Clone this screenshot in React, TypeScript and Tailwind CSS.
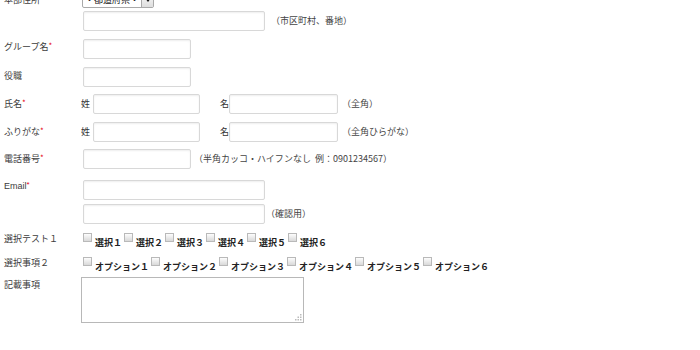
import React from "react";

const base = "font-['Noto_Sans_CJK_JP','Noto_Sans',sans-serif]";
const input =
  "block h-[20px] bg-white border border-[#d8d8d8] rounded-[2px] shadow-[inset_0_1px_2px_rgba(0,0,0,0.07)]";

function Req() {
  return <span className="text-[#e60012] text-[8px] align-top relative top-[-1px]">*</span>;
}

function Label({
  children,
  req,
  narrow,
  className = "",
}: {
  children: React.ReactNode;
  req?: boolean;
  narrow?: boolean;
  className?: string;
}) {
  return (
    <div
      className={`${narrow ? "w-[81px]" : "w-[83px]"} shrink-0 pl-[4px] text-[9px] leading-[12px] text-[#3c3c3c] ${className}`}
    >
      {children}
      {req && <Req />}
    </div>
  );
}

function Check({ text }: { text: string }) {
  return (
    <label className="flex items-start mr-[2px]">
      <span className="block w-[9px] h-[9px] border border-[#b9b9b9] bg-gradient-to-b from-[#fdfdfd] to-[#d9d9d9]" />
      <span className="ml-[3px] mt-[4px] text-[9px] leading-[12px] font-bold text-[#222]">{text}</span>
    </label>
  );
}

export default function App() {
  const tests = ["選択１", "選択２", "選択３", "選択４", "選択５", "選択６"];
  const opts = ["オプション１", "オプション２", "オプション３", "オプション４", "オプション５", "オプション６"];

  return (
    <div className={`w-[700px] h-[350px] overflow-hidden bg-white ${base}`}>
      <div className="-mt-[8px]">
        {/* 本部住所 */}
        <div className="flex">
          <Label className="pt-[2px]">本部住所</Label>
          <div className="-ml-[1px] flex h-[16px] w-[72px] border border-[#a9a9a9] rounded-[2px] bg-white">
            <span className="flex-1 text-[9px] leading-[14px] text-[#222] pl-[2px]">・都道府県・</span>
            <span className="w-[12px] border-l border-[#a9a9a9] bg-gradient-to-b from-[#fafafa] to-[#dedede] flex items-center justify-center">
              <svg width="6" height="4" viewBox="0 0 6 4"><path d="M0 0h6L3 4z" fill="#111" /></svg>
            </span>
          </div>
        </div>
        <div className="flex items-center mt-[3px]">
          <div className="w-[83px] shrink-0" />
          <span className={`${input} w-[182px]`} />
          <span className="ml-[6px] text-[9px] text-[#444]">（市区町村、番地）</span>
        </div>

        {/* グループ名 */}
        <div className="flex mt-[8px]">
          <Label req className="pt-[2px]">グループ名</Label>
          <span className={`${input} w-[108px]`} />
        </div>

        {/* 役職 */}
        <div className="flex mt-[8px]">
          <Label className="pt-[3px]">役職</Label>
          <span className={`${input} w-[108px]`} />
        </div>

        {/* 氏名 */}
        <div className="flex items-center mt-[7px]">
          <Label req narrow>氏名</Label>
          <span className="text-[9px] text-[#333] w-[12px]">姓</span>
          <span className={`${input} w-[107px]`} />
          <span className="ml-[20px] text-[9px] text-[#333] w-[9px]">名</span>
          <span className={`${input} w-[109px]`} />
          <span className="ml-[4px] text-[9px] text-[#444]">（全角）</span>
        </div>

        {/* ふりがな */}
        <div className="flex items-center mt-[8px]">
          <Label req narrow>ふりがな</Label>
          <span className="text-[9px] text-[#333] w-[12px]">姓</span>
          <span className={`${input} w-[107px]`} />
          <span className="ml-[20px] text-[9px] text-[#333] w-[9px]">名</span>
          <span className={`${input} w-[109px]`} />
          <span className="ml-[4px] text-[9px] text-[#444]">（全角ひらがな）</span>
        </div>

        {/* 電話番号 */}
        <div className="flex items-center mt-[7px]">
          <Label req>電話番号</Label>
          <span className={`${input} w-[108px]`} />
          <span className="ml-[3px] text-[9px] text-[#444]">（半角カッコ・ハイフンなし&nbsp;&nbsp;例：0901234567）</span>
        </div>

        {/* Email */}
        <div className="flex mt-[11px]">
          <Label req className="font-['Liberation_Sans',sans-serif]">Email</Label>
          <div>
            <span className={`${input} w-[182px]`} />
            <div className="flex items-center mt-[4px]">
              <span className={`${input} w-[182px]`} />
              <span className="ml-[1px] text-[9px] text-[#444]">（確認用）</span>
            </div>
          </div>
        </div>

        {/* 選択テスト１ */}
        <div className="flex mt-[9px]">
          <Label>選択テスト１</Label>
          <div className="flex">
            {tests.map((t) => (
              <Check key={t} text={t} />
            ))}
          </div>
        </div>

        {/* 選択事項２ */}
        <div className="flex mt-[8px]">
          <Label>選択事項２</Label>
          <div className="flex">
            {opts.map((t) => (
              <Check key={t} text={t} />
            ))}
          </div>
        </div>

        {/* 記載事項 */}
        <div className="flex mt-[4px]">
          <Label narrow className="pt-[2px]">記載事項</Label>
          <div className="relative">
            <textarea className="block w-[223px] h-[46px] resize-none border border-[#b8b8b8] bg-white outline-none" />
            <svg className="absolute right-[2px] bottom-[2px]" width="7" height="7" viewBox="0 0 7 7">
              <rect x="5" y="0" width="1.5" height="1.5" fill="#bbb" />
              <rect x="2.5" y="2.5" width="1.5" height="1.5" fill="#bbb" />
              <rect x="5" y="2.5" width="1.5" height="1.5" fill="#bbb" />
              <rect x="0" y="5" width="1.5" height="1.5" fill="#bbb" />
              <rect x="2.5" y="5" width="1.5" height="1.5" fill="#bbb" />
              <rect x="5" y="5" width="1.5" height="1.5" fill="#bbb" />
            </svg>
          </div>
        </div>
      </div>
    </div>
  );
}
